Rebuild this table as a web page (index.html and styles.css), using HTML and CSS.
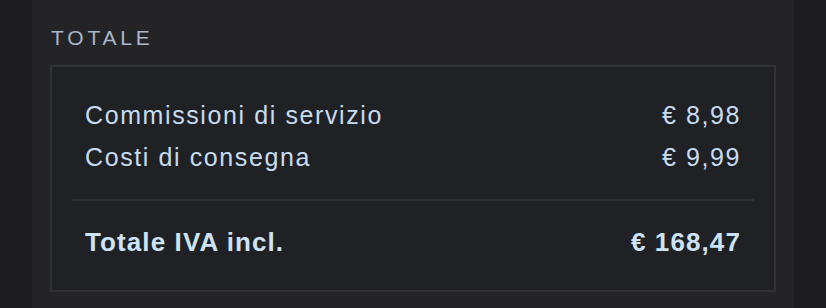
FILE: index.html
```html
<!DOCTYPE html>
<html lang="it">
<head>
    <meta charset="UTF-8">
    <meta name="viewport" content="width=device-width, initial-scale=1.0">
    <title>Totale</title>
    <link rel="stylesheet" href="styles.css">
</head>
<body>
    <div class="page">
        <section class="panel">
            <h2 class="section-title">TOTALE</h2>
            <div class="summary">
                <div class="lines">
                    <div class="line">
                        <span>Commissioni di servizio</span>
                        <span>€ 8,98</span>
                    </div>
                    <div class="line">
                        <span>Costi di consegna</span>
                        <span>€ 9,99</span>
                    </div>
                </div>
                <hr>
                <div class="line total">
                    <span>Totale IVA incl.</span>
                    <span>€ 168,47</span>
                </div>
            </div>
        </section>
    </div>
</body>
</html>
```

FILE: styles.css
```css
body {
    font-family: 'Liberation Sans', Arial, sans-serif;
    background-color: #1d1d1f;
    margin: 0;
    padding: 0;
}

.page {
    padding: 0 32px;
    height: 308px;
}

.panel {
    background-color: #242427;
    height: 100%;
    padding: 26px 18px 0 18px;
    box-sizing: border-box;
}

.section-title {
    margin: 0 0 15px 1px;
    font-size: 21px;
    line-height: 24px;
    font-weight: normal;
    letter-spacing: 3.8px;
    color: #a9b7ca;
}

.summary {
    background-color: #202124;
    border: 2px solid #313236;
    padding: 0 20px;
}

.lines {
    padding: 27px 0 21px 0;
}

.line {
    display: flex;
    justify-content: space-between;
    padding: 0 13px;
    font-size: 25px;
    line-height: 42px;
    letter-spacing: 1.6px;
    color: #c6dcf2;
}

hr {
    margin: 0;
    border: 0;
    border-top: 2px solid #2e2f33;
}

.total {
    font-weight: bold;
    font-size: 26px;
    letter-spacing: 1.1px;
    color: #cde3f9;
    padding-top: 20px;
    padding-bottom: 27px;
}
```
